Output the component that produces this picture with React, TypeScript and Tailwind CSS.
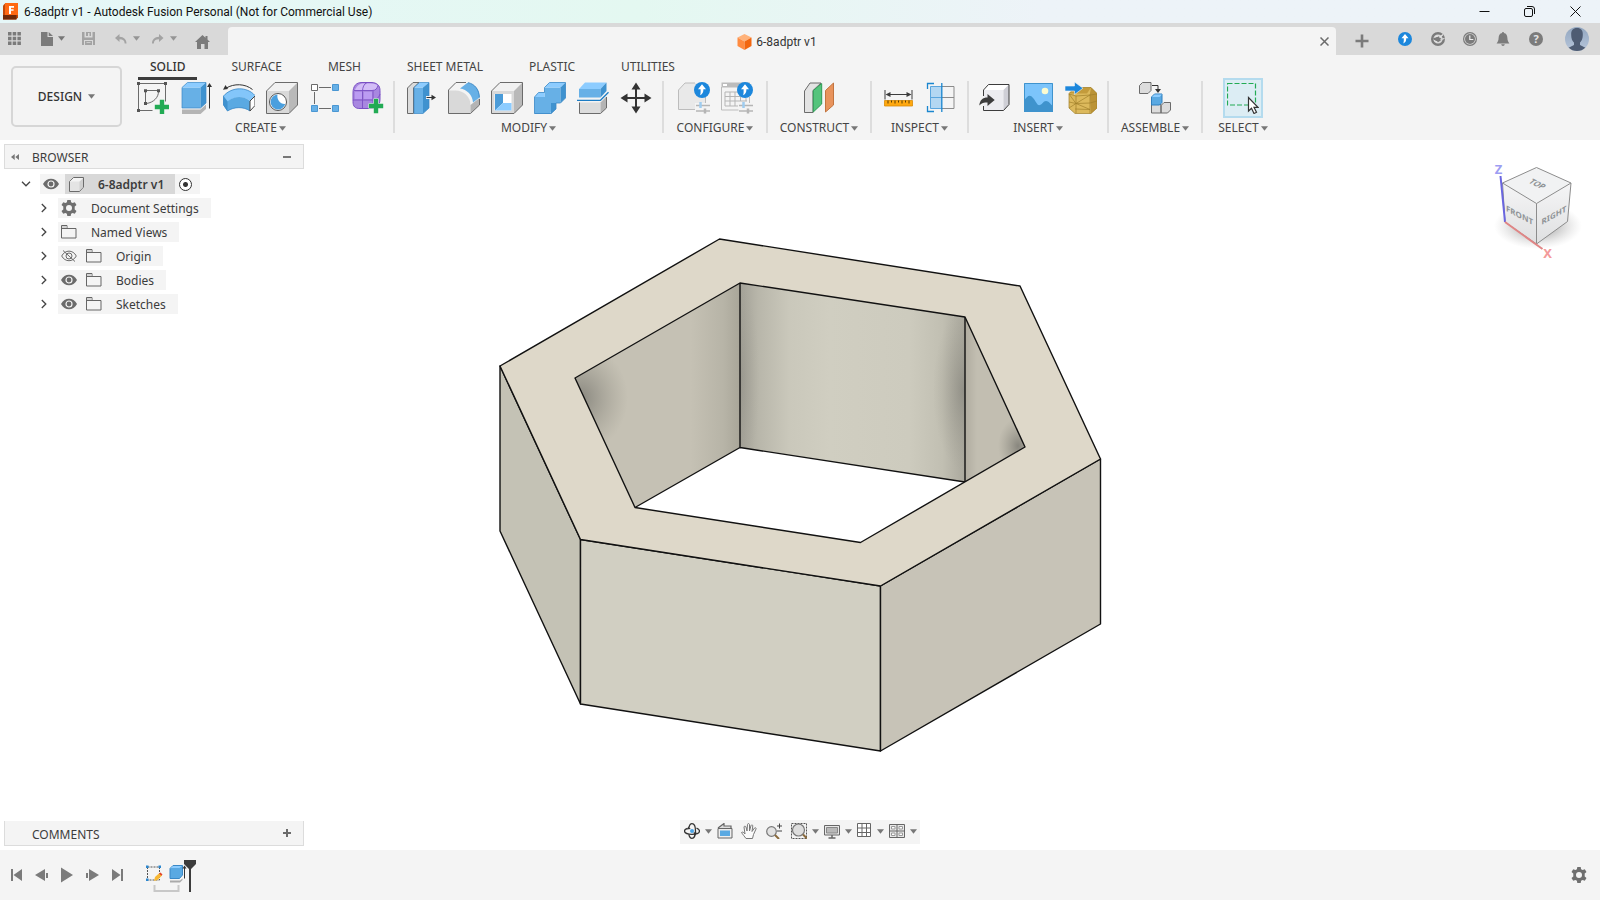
import React from 'react'

const LINE = '#6b6b6b'
const DARK = '#3c3c3c'

const Caret = ({ className = 'text-[#777777]' }: { className?: string }) => (
  <svg className={`${className} shrink-0`} width="7" height="5" viewBox="0 0 7 5" fill="currentColor">
    <path d="M0 0.3h7L3.5 4.8z" />
  </svg>
)

const Icon = ({ children, size = 32 }: { children: React.ReactNode; size?: number }) => (
  <svg className="shrink-0" width={size} height={size} viewBox={`0 0 ${size} ${size}`} fill="none">
    {children}
  </svg>
)

const GreenPlus = ({ x, y }: { x: number; y: number }) => (
  <path
    transform={`translate(${x} ${y})`}
    d="M-2.2-7.2h4.4v5h5v4.4h-5v5h-4.4v-5h-5v-4.4h5z"
    fill="#22ab54"
    stroke="#f4f4f4"
    strokeWidth="1"
    paintOrder="stroke"
  />
)

const UpBadge = ({ x, y, r }: { x: number; y: number; r: number }) => (
  <g transform={`translate(${x} ${y}) scale(${r / 8})`}>
    <circle r="8" fill="#1c87dc" />
    <path d="M0-5.8L4-0.8H1.4C1.4 2 .8 4-2 5.2-1.2 3.5-1.4 1.500-1.400-.8H-4z" fill="#fff" />
  </g>
)

const Sliders = () => (
  <g>
    <path d="M18 23.500h14M18 29h14" stroke="#b5b5b5" strokeWidth="1.500" />
    <path d="M22.500 20v6" stroke="#9fcdf0" strokeWidth="2.500" />
    <path d="M27 26.500v5" stroke="#b5b5b5" strokeWidth="2.500" />
  </g>
)

const icons: Record<string, React.ReactNode> = {
  sketch: (
    <>
      <path d="M1.500 28.500v-27h27v18M1.500 28.500h14" stroke={LINE} />
      <path d="M8.500 21V8.500H21M21.500 9.500c0 6-5 11-12 12" stroke={LINE} />
      <path d="M0 0h3v3H0zM27 0h3v3h-3zM0 27h3v3H0zM7 7.200h3v3H7zM20 7.200h3v3h-3zM7 20h3v3H7z" fill="#555" />
      <GreenPlus x={25} y={25} />
    </>
  ),
  extrude: (
    <>
      <path d="M2 27.500h18.500l5.500-5v4.500l-5.500 5H2z" fill="#b4b4b4" />
      <path d="M2 5.500h18.500v20.500H2z" fill="#67b0e6" />
      <path d="M2 5.500l5.500-5H26l-5.500 5z" fill="#8cccff" />
      <path d="M20.500 5.500l5.500-5v20.500l-5.500 5z" fill="#3f92cf" />
      <path d="M2 26V5.500l5.500-5H26v20.500l-5.500 5z" stroke="#3a88c6" strokeWidth="0.700" />
      <path d="M29.500 3v23.500" stroke="#333" />
      <path d="M27 5l2.500-4L32 5z" fill="#333" />
    </>
  ),
  revolve: (
    <>
      <path d="M3 6.200C11 1.300 22 1.500 29.500 7.500" stroke="#333" />
      <path d="M0 7.800L2.500 3l2.500 4z" fill="#333" />
      <path d="M.5 14C9 4.500 24 4.500 32 13.500l-5 5.500c-6-5-16-5-22.500 1z" fill="#83c6fa" />
      <path d="M.5 14l4 5.500C11 13.500 21 13.500 27 19v10c-6-4.500-16-4.500-22.500 0L.5 23z" fill="#5aa9e2" />
      <path d="M.5 14l4 5.500V29L.5 23z" fill="#3f92cf" />
      <path d="M.5 23V14C9 4.500 24 4.500 32 13.500M.5 23l4 6c6.500-4.500 16.500-4.500 22.500 0" stroke="#3a88c6" strokeWidth="0.800" />
      <path d="M27 19l5-5v9.500L27 29z" fill="#fff" stroke="#444" />
    </>
  ),
  hole: (
    <>
      <path d="M.5 9h22.500v22.500H.5z" fill="#d9d9d9" />
      <path d="M.5 9L9 .5h22.500L23 9z" fill="#f1f1f1" />
      <path d="M23 9l8.500-8.500V23L23 31.500z" fill="#b9b9b9" />
      <path d="M.5 9L9 .5h22.500V23L23 31.500H.5z" stroke={LINE} />
      <circle cx="12" cy="20" r="8.500" fill="#fff" stroke="#555" />
      <path d="M11.500 12.500a7.500 7.500 0 1 0 7.800 9.500c-5 .5-8.800-4.500-7.800-9.500z" fill="#4a9fde" />
    </>
  ),
  pattern: (
    <>
      <path d="M10 5.500h12M5.500 10v12M10 26.500h12" stroke={LINE} />
      <path d="M2.500 2.500h6v6h-6z" fill="#fff" stroke={LINE} />
      <path d="M23.500 2.500h6v6h-6zM2.500 23.500h6v6h-6zM23.500 23.500h6v6h-6z" fill="#67b0e6" stroke="#4a97d3" />
    </>
  ),
  form: (
    <>
      <path d="M1 11C1 4 4 .5 10 .5h9c6 0 9 3 9 8V17c0 6-3 9.500-9 9.500H8c-5 0-7-2-7-7z" fill="#a887e0" stroke="#7a4fc4" />
      <path d="M3 8C5 3 8 1.500 12 1.500h7c4 0 6 1 7 3l-3 3.500z" fill="#d3bdf7" />
      <path d="M3 10h7v7H3zM12 10h8v7h-8z" fill="#bb9bf2" />
      <path d="M1 18h20c4 0 6-3 7-6M10.500 26V9.500C10.500 5 12 2 15 .5M2 8.500h18c4 0 5-2 6-5M21 26V9" stroke="#7a4fc4" strokeWidth="0.900" />
      <GreenPlus x={24} y={24} />
    </>
  ),
  pressPull: (
    <>
      <path d="M2.500 6L8 .5h6L8.500 6v25.500h-6z" fill="#dcdcdc" stroke={LINE} />
      <path d="M9 5.500h9v26H9z" fill="#67b0e6" />
      <path d="M9 5.500l5.500-5H24l-6 5z" fill="#8cccff" />
      <path d="M18 5.500l6-5V26l-6 5.500z" fill="#3f92cf" />
      <path d="M9 31.500v-26l5.500-5H24V26l-6 5.500z" stroke="#3a88c6" strokeWidth="0.700" />
      <path d="M21 15.500h7" stroke="#f4f4f4" strokeWidth="3" />
      <path d="M21.500 15.500h6" stroke="#333" />
      <path d="M26.500 12.800l4.500 2.700-4.500 2.700z" fill="#333" />
    </>
  ),
  fillet: (
    <>
      <path d="M.5 8L8 .5h10.500L13 7z" fill="#f4f4f4" />
      <path d="M.5 8.500h7C16 8.500 22.500 15 22.500 23v8.500H.5z" fill="#d9d9d9" />
      <path d="M22.500 23l9-7v7l-9 8.500z" fill="#b4b4b4" />
      <path d="M12 6.500L19.500.7C27 2 31.500 8 31.500 15.500L25 20.500C24.500 13 19 7.500 12 6.500z" fill="#67b0e6" />
      <path d="M20 .7C27 2 31.300 8 31.300 15.500" stroke="#3a88c6" />
      <path d="M18 .5H8L.5 8v23.500h22L31.500 23v-6" stroke={LINE} />
    </>
  ),
  shell: (
    <>
      <path d="M.5 9h22.500v22.500H.5z" fill="#d9d9d9" />
      <path d="M.5 9L9 .5h22.500L23 9z" fill="#f1f1f1" />
      <path d="M23 9l8.500-8.500V23L23 31.500z" fill="#b9b9b9" />
      <path d="M.5 9L9 .5h22.500V23L23 31.500H.5z" stroke={LINE} />
      <path d="M3.500 12h17v16.500h-17z" fill="#fff" />
      <path d="M4 12h8v9l-8 7.500z" fill="#4a9bd8" />
      <path d="M12 21h8.500v7.500H4z" fill="#8cccff" />
    </>
  ),
  combine: (
    <>
      <path d="M10.500 5.500h16V21h-9v5.500l-1 5.500H.5V15h10z" fill="#67b0e6" />
      <path d="M10.500 5.500l5-5h16l-5 5z" fill="#8cccff" />
      <path d="M26.500 5.500l5-5V16l-5 5z" fill="#3f92cf" />
      <path d="M.5 15l4-4.500h6V15z" fill="#8cccff" />
      <path d="M17 21h5v6l-5 5z" fill="#3f92cf" />
      <path d="M.5 31.500V15l4-4.500h6v-5l5-5h16V16l-5 5H22v6l-5 4.500z" stroke="#3a88c6" strokeWidth="0.800" />
    </>
  ),
  split: (
    <>
      <path d="M2 7h21.500v8.500H2z" fill="#67b0e6" />
      <path d="M2 7L8 .5h21.500l-6 6.500z" fill="#8cccff" />
      <path d="M23.500 7l6-6.500V9l-6 6.500z" fill="#3f92cf" />
      <path d="M2 20.500h21.500v11H2z" fill="#dcdcdc" />
      <path d="M23.500 20.500l6-6V26l-6 5.500z" fill="#b4b4b4" />
      <path d="M2.500 20.500v11h21l6-5.500V15" stroke={LINE} />
      <path d="M0 18.300h23.500l8-8" stroke="#1c7cc4" strokeWidth="1.300" />
    </>
  ),
  move: (
    <>
      <path d="M16 5v22M5 16h22" stroke="#333" strokeWidth="2" />
      <path d="M16 .5l4.500 7h-9zM16 31.500l4.500-7h-9zM.5 16l7-4.500v9zM31.500 16l-7-4.500v9z" fill="#333" />
    </>
  ),
  configure: (
    <>
      <path d="M.5 8L7 1h21v20H17v6.500H.5z" fill="#e9e9e9" />
      <path d="M17 27.500H.5V8L7 1h10M27.500 15v6" stroke="#bcbcbc" />
      <UpBadge x={24} y={8} r={8} />
      <Sliders />
    </>
  ),
  configTable: (
    <>
      <path d="M.5.500h28.500v5H.5z" fill="#bcbcbc" />
      <path d="M2 2h4v2H2z" fill="#fff" />
      <path d="M.5 5v23h17M28.500 15v6" stroke="#bcbcbc" />
      <path d="M4 10h15M4 14.500h22M4 19h22M4 24h13M4 10v14M9 10v14M14 10v14M19.500 15v4M25 16v3" stroke="#b5b5b5" />
      <UpBadge x={24} y={8} r={8} />
      <Sliders />
    </>
  ),
  construct: (
    <>
      <path d="M1.500 9L7 1h11l-8 7.500v22H1.500z" fill="#e3e3e3" stroke={LINE} />
      <path d="M10.300 8.500l8.400-7V22l-8.400 8z" fill="#55c47c" stroke="#2e9c56" />
      <path d="M22.500 8.500L30.500 1v22l-8 7z" fill="#e8935c" stroke="#c2743f" />
    </>
  ),
  measure: (
    <>
      <path d="M3 8v9.500M30 8v9.500M5 12.500h23" stroke={DARK} />
      <path d="M3.500 12.500l5-2.500v5zM29.500 12.500l-5-2.500v5z" fill={DARK} />
      <path d="M2.500 18.500h28v5.500h-28z" fill="#ffa80f" stroke="#d98b06" strokeWidth="0.800" />
      <path d="M6 18.500v3M9.500 18.500v2M13 18.500v3M16.500 18.500v2M20 18.500v3M23.500 18.500v2M27 18.500v3" stroke="#5a3c00" />
    </>
  ),
  section: (
    <>
      <path d="M5.500 4.500h11.500v22H5.500z" fill="#b3d7f2" />
      <path d="M17 4.500h12v22H17M17 15.500h12" stroke="#8b8b8b" />
      <path d="M17 4.500H5.500v22H17M5.500 15.500H17" stroke="#5aa5dd" />
      <path d="M16.800 1v29M2.500 7V1.500H9M2.500 24v5.500H9" stroke="#1a86cf" strokeWidth="1.300" />
    </>
  ),
  derive: (
    <>
      <path d="M4.500 8h20v20.500h-20z" fill="#ececf0" />
      <path d="M4.500 8l5-5.500H30L24.500 8z" fill="#fff" />
      <path d="M24.500 8L30 2.500v20l-5.500 6z" fill="#cfcfd6" />
      <path d="M4.500 14V8l5-5.500H30v20l-5.500 6h-20V24" stroke={DARK} />
      <path d="M.3 23.500c.5-5.500 3.500-8 8.200-8v-3.500L15.700 18l-7.200 6v-3.500c-3.500 0-6 .5-8.200 3z" fill={DARK} />
    </>
  ),
  image: (
    <>
      <path d="M2 1h29v29H2z" fill="#7cc4fb" />
      <path d="M2 19c3-5 6-7 9-3 3 3 4 8 7 7s3-4 6-4 4 3 7 5v6H2z" fill="#3f93cd" />
      <circle cx="23" cy="9" r="3.300" fill="#fbfbd0" />
      <path d="M2.500 1.500h28v28h-28z" stroke="#3f93cd" />
    </>
  ),
  mesh: (
    <>
      <path d="M10 5.500h16l6 6V26l-6 5.500H10L4 26V11.500z" fill="#dcb95c" />
      <path d="M10 5.500h16l-4 6H4z" fill="#c39b3c" />
      <path d="M26 5.500l6 6V26l-6 5.500-1-20z" fill="#bb9336" />
      <path d="M10 5.500h16l6 6V26l-6 5.500H10L4 26V11.500zM4 12l7 2 14-1 7-1M4 20l7 1.500 14-.5 7-2M10 27l15 .5M11 14v17M25 12.500v19M4 12l7 9.500L25 13M4 26l7-4.500 14 6" stroke="#a07f2a" strokeWidth="0.700" />
      <path d="M0 4h9.500V0L18 6.200 9.500 12.500V9H0z" fill="#1c87dc" stroke="#f4f4f4" strokeWidth="0.600" />
    </>
  ),
  assemble: (
    <>
      <path d="M.5 3.500l3-3h8.500v8l-3 3H.5z" fill="#dcdcdc" stroke={LINE} />
      <path d="M13 3.500h6v4" stroke="#333" />
      <path d="M16 7h6l-3 4z" fill="#333" />
      <path d="M12.500 22.500h9.500v8.500h-9.500zM22 23.500l3-3h6.500V28l-3 3H22z" fill="#dcdcdc" stroke={LINE} />
      <path d="M12.500 15l3-3H23v8.500L20.500 23h-8z" fill="#5aa9e2" stroke="#2f7fbe" />
      <path d="M13 15l2.500-2.500H23L20.500 15z" fill="#8cccff" />
    </>
  ),
  select: (
    <>
      <path d="M.5 1.500h28v21.500H.5z" stroke="#22ab54" strokeWidth="1.200" strokeDasharray="5 2" />
      <path d="M21.500 15.500v13.500l3-2.800 2.500 5.300 2.500-1.200-2.500-5h4z" fill="#fff" stroke="#333" strokeWidth="1.200" />
    </>
  ),
}

const ribbonTabs = ['SOLID', 'SURFACE', 'MESH', 'SHEET METAL', 'PLASTIC', 'UTILITIES']

const ribbonGroups = [
  { name: 'CREATE', width: 'w-[267px]', tools: ['sketch', 'extrude', 'revolve', 'hole', 'pattern', 'form'] },
  { name: 'MODIFY', width: 'w-[269px]', tools: ['pressPull', 'fillet', 'shell', 'combine', 'split', 'move'] },
  { name: 'CONFIGURE', width: 'w-[104px]', tools: ['configure', 'configTable'] },
  { name: 'CONSTRUCT', width: 'w-[104px]', tools: ['construct'] },
  { name: 'INSPECT', width: 'w-[97px]', tools: ['measure', 'section'] },
  { name: 'INSERT', width: 'w-[140px]', tools: ['derive', 'image', 'mesh'] },
  { name: 'ASSEMBLE', width: 'w-[94px]', tools: ['assemble'] },
  { name: 'SELECT', width: 'w-[80px]', tools: ['select'] },
]

const TitleBar = () => (
  <header className="flex h-[23px] shrink-0 items-center bg-linear-to-r from-[#e6f7f8] via-[#e4f8f1] via-40% to-[#edf3f8] to-65% pl-[3px] font-[Roboto,sans-serif] text-xs text-[#111111]">
    <svg width="15" height="17" viewBox="0 0 15 17" className="mr-[6px]">
      <path d="M0 2.500L2 .5h13v14l-2 2H0z" fill="#c14a0a" />
      <path d="M2 0h13v12H2z" fill="#ff6a13" />
      <path d="M0 12h13.500v4.500H0z" fill="#6e2a08" />
      <path d="M6 3h5v1.700H8v1.500h2.600v1.600H8V11H6z" fill="#fff" />
    </svg>
    <h1 className="flex-1 whitespace-nowrap">6-8adptr v1 - Autodesk Fusion Personal (Not for Commercial Use)</h1>
    <div className="flex pr-[2px]">
      <button aria-label="Minimize" className="flex h-5 w-[46px] items-center justify-center">
        <svg width="11" height="11" viewBox="0 0 11 11" stroke="#111"><path d="M.5 5.500h10" /></svg>
      </button>
      <button aria-label="Restore" className="flex h-5 w-[45px] items-center justify-center">
        <svg width="11" height="11" viewBox="0 0 11 11" stroke="#111" fill="none">
          <rect x=".5" y="2.500" width="8" height="8" rx="1.500" />
          <path d="M3 .5h5a2.500 2.500 0 0 1 2.500 2.500v5" />
        </svg>
      </button>
      <button aria-label="Close" className="flex h-5 w-[46px] items-center justify-center">
        <svg width="11" height="11" viewBox="0 0 11 11" stroke="#111"><path d="M.5.500l10 10M10.500.500l-10 10" /></svg>
      </button>
    </div>
  </header>
)

const QuickAccess = () => (
  <nav className="flex w-[228px] shrink-0 items-center pb-[1px] pl-2 text-[#7b7b7b]">
    <button aria-label="Data panel">
      <svg width="13" height="13" viewBox="0 0 13 13" fill="currentColor">
        <path d="M0 0h3.500v3.500H0zM4.700 0h3.500v3.500H4.700zM9.400 0h3.500v3.500H9.400zM0 4.700h3.500v3.500H0zM4.700 4.700h3.500v3.500H4.700zM9.400 4.700h3.500v3.500H9.400zM0 9.400h3.500v3.500H0zM4.700 9.400h3.500v3.500H4.700zM9.400 9.400h3.500v3.500H9.400z" />
      </svg>
    </button>
    <button aria-label="File" className="ml-5 flex items-center gap-[5px]">
      <svg width="12" height="14" viewBox="0 0 12 14" fill="currentColor">
        <path d="M0 0h6.500v5H12v9H0zM7.700 0L12 4H7.700z" />
      </svg>
      <Caret />
    </button>
    <button aria-label="Save" className="ml-[17px] text-[#a3a3a3]">
      <svg width="13" height="13" viewBox="0 0 13 13" fill="currentColor">
        <path fillRule="evenodd" d="M0 0h2.500v5.500h8V0H13v13h-2v-5H2v5H0zM4 0h5v4H7.500V1H6v3H4zM3 9h7v4H3zM4.500 10.200v.8h4v-.8z" />
      </svg>
    </button>
    <button aria-label="Undo" className="ml-5 flex items-center gap-[6px] text-[#a3a3a3]">
      <svg width="12" height="10" viewBox="0 0 12 10" fill="currentColor">
        <path d="M0 4l4.500-4v2.800C9 3 11.500 5.500 11.500 9.500h-1.800C9.500 6.500 8 5.200 4.500 5.200V8z" />
      </svg>
      <Caret className="text-[#959595]" />
    </button>
    <button aria-label="Redo" className="ml-[12px] flex items-center gap-[6px] text-[#a3a3a3]">
      <svg width="12" height="10" viewBox="0 0 12 10" fill="currentColor">
        <path d="M11.500 4L7 0v2.800C2.500 3 0 5.500 0 9.500h1.800C2 6.500 3.500 5.200 7 5.200V8z" />
      </svg>
      <Caret className="text-[#959595]" />
    </button>
    <button aria-label="Home" className="ml-[18px] pt-[6px]">
      <svg width="15" height="14" viewBox="0 0 15 14" fill="currentColor">
        <path d="M7.500 0l3 2.700V1h2v3.500L15 7H13v7H9.500V9h-3.500v5H2V7H0z" />
      </svg>
    </button>
  </nav>
)

const AccountBar = () => (
  <div className="flex w-[264px] shrink-0 items-center justify-between pr-[11px] pb-[1px] pl-[19px] text-[#7b7b7b]">
    <button aria-label="New tab" className="mr-[10px] pt-1">
      <svg width="14" height="14" viewBox="0 0 14 14" stroke="currentColor" strokeWidth="2.600"><path d="M7 .5v13M.5 7h13" /></svg>
    </button>
    <button aria-label="Updates">
      <svg width="14" height="14" viewBox="0 0 14 14"><UpBadge x={7} y={7} r={7} /></svg>
    </button>
    <button aria-label="Extensions">
      <svg width="14" height="14" viewBox="0 0 14 14" fill="none">
        <circle cx="7" cy="7" r="5.800" stroke="currentColor" strokeWidth="2.400" />
        <path d="M2 6.500L7.500 4l3.500 3.500L7.500 10 4 9z" fill="currentColor" />
        <path d="M4 4.800l3.500-1M8.500 5.500L12 2.500M9.500 7.500l4-1M3 8.500l3 1.500" stroke="#e4e4e4" strokeWidth="1.200" />
      </svg>
    </button>
    <button aria-label="Job status">
      <svg width="14" height="14" viewBox="0 0 14 14">
        <circle cx="7" cy="7" r="6.400" fill="none" stroke="currentColor" strokeWidth="1.200" />
        <circle cx="7" cy="7" r="5" fill="currentColor" />
        <path d="M6.800 3.500v4h3.500" stroke="#eee" strokeWidth="1.200" fill="none" />
      </svg>
    </button>
    <button aria-label="Notifications">
      <svg width="14" height="14" viewBox="0 0 14 14" fill="currentColor">
        <path d="M6.200 0h1.600v1c2.700.5 3.400 2.300 3.600 5 .1 2.500.8 3.500 2 5.500H.6c1.200-2 1.900-3 2-5.500C2.800 3.300 3.500 1.500 6.200 1zM5.200 12.300h3.600C8.500 13.500 8 14 7 14s-1.500-.5-1.800-1.700z" />
      </svg>
    </button>
    <button aria-label="Help" className="flex size-[14px] items-center justify-center rounded-full bg-[#7b7b7b] text-[11px] leading-none font-bold text-[#e4e4e4]">?</button>
    <button aria-label="Account" className="ml-[3px]">
      <svg width="24" height="24" viewBox="0 0 24 24">
        <defs>
          <linearGradient id="avatar" x1="0" y1="0" x2="0" y2="1">
            <stop offset="0" stopColor="#93a7c0" />
            <stop offset="1" stopColor="#b6c5da" />
          </linearGradient>
          <clipPath id="avatarClip"><circle cx="12" cy="12" r="12" /></clipPath>
        </defs>
        <g clipPath="url(#avatarClip)">
          <path d="M0 0h24v24H0z" fill="url(#avatar)" />
          <path d="M12 1c4 0 6 2.500 5.800 6.500C17.800 12 16.500 14 15 15.500V18l6 3v3H3v-3l6-3v-2.500C7.500 14 6.200 12 6.200 7.500 6 3.500 8 1 12 1z" fill="#4e5c73" />
        </g>
      </svg>
    </button>
  </div>
)

const TabBar = () => (
  <div className="flex h-8 shrink-0 bg-[#d9d9d9]">
    <QuickAccess />
    <div className="mt-1 flex flex-1 items-center rounded-t-[4px] bg-[#f4f4f4] pt-px pr-[7px]">
      <div className="flex flex-1 items-center justify-center gap-[4px] pr-[4px] pl-[10px] font-[Roboto,sans-serif] text-xs text-[#333333]">
        <svg width="15" height="16" viewBox="0 0 15 16">
          <path d="M7.500 0L14.500 3.500 7.500 7.500.500 3.500z" fill="#ffb27a" />
          <path d="M.5 3.500l7 4V16l-7-4z" fill="#ff8b40" />
          <path d="M14.500 3.500l-7 4V16l7-4z" fill="#f2660f" />
        </svg>
        <span>6-8adptr v1</span>
      </div>
      <button aria-label="Close tab">
        <svg width="9" height="9" viewBox="0 0 9 9" stroke="#6b6b6b" strokeWidth="1.500"><path d="M.5.500l8 8M8.500.500l-8 8" /></svg>
      </button>
    </div>
    <AccountBar />
  </div>
)

const Ribbon = () => (
  <div className="flex h-[85px] shrink-0 bg-[#f4f4f4] pl-[11px]">
    <button className="mt-[11px] flex h-[61px] w-[111px] shrink-0 items-center justify-center gap-[6px] rounded-[5px] border-2 border-[#d6d6d6] text-xs font-medium text-[#333333]">
      DESIGN <Caret />
    </button>
    <div className="ml-[6px] flex flex-col">
      <div role="tablist" className="flex h-[25px] gap-[22px] pl-[10px]">
        {ribbonTabs.map((tab, i) => (
          <button
            key={tab}
            role="tab"
            aria-selected={i === 0}
            className={
              i === 0
                ? 'border-b-[3px] border-[#3c3c3c] px-3 pt-[2px] text-xs font-medium whitespace-nowrap text-[#333333]'
                : 'border-b-[3px] border-transparent px-3 pt-[2px] text-xs whitespace-nowrap text-[#444444]'
            }
          >
            {tab}
          </button>
        ))}
      </div>
      <div className="flex">
        {ribbonGroups.map(group => (
          <section
            key={group.name}
            className={`${group.width} mt-[1px] flex h-[52px] shrink-0 flex-col items-center border-r-2 border-[#dddddd] last:border-r-0`}
          >
            <div className="flex h-[33px] shrink-0 items-center">
              {group.tools.map(tool => (
                <button
                  key={tool}
                  aria-label={tool}
                  className={
                    tool === 'select'
                      ? 'flex size-10 items-center justify-center border-2 border-[#b4dbee] bg-[#dcedf4]'
                      : 'flex h-9 w-[43px] items-center justify-center'
                  }
                >
                  <Icon>{icons[tool]}</Icon>
                </button>
              ))}
            </div>
            <button className="mt-1 flex h-5 shrink-0 items-center gap-[2px] text-xs whitespace-nowrap text-[#444444]">
              {group.name} <Caret />
            </button>
          </section>
        ))}
      </div>
    </div>
  </div>
)

const Model = () => (
  <svg className="block h-full w-full" viewBox="0 140 1600 710" role="img" aria-label="Hexagonal adapter body">
    <defs>
      <linearGradient id="backWall" gradientUnits="userSpaceOnUse" x1="740" y1="0" x2="965" y2="0">
        <stop offset="0" stopColor="#a3a197" />
        <stop offset="0.080" stopColor="#b8b6aa" />
        <stop offset="0.220" stopColor="#cac8bb" />
        <stop offset="0.400" stopColor="#d0cec1" />
        <stop offset="0.750" stopColor="#cdcbbe" />
        <stop offset="0.900" stopColor="#c1bfb2" />
        <stop offset="1" stopColor="#aaa89d" />
      </linearGradient>
      <linearGradient id="leftWall" gradientUnits="userSpaceOnUse" x1="575" y1="0" x2="740" y2="0">
        <stop offset="0" stopColor="#c5c1b4" />
        <stop offset="0.700" stopColor="#c5c1b4" />
        <stop offset="0.900" stopColor="#b7b4a7" />
        <stop offset="1" stopColor="#a9a699" />
      </linearGradient>
      <linearGradient id="rightWall" gradientUnits="userSpaceOnUse" x1="965" y1="0" x2="1025" y2="0">
        <stop offset="0" stopColor="#b0aca0" />
        <stop offset="0.200" stopColor="#c2beb1" />
        <stop offset="1" stopColor="#c2beb1" />
      </linearGradient>
      <radialGradient id="shade">
        <stop offset="0" stopColor="#6f6e68" stopOpacity="0.700" />
        <stop offset="1" stopColor="#8b897e" stopOpacity="0" />
      </radialGradient>
      <clipPath id="leftClip"><path d="M575 378L740 283v164.500L635 507.500z" /></clipPath>
      <clipPath id="backClip"><path d="M740 283l225 34v165l-225-34.500z" /></clipPath>
      <clipPath id="rightClip"><path d="M965 317l60 130-60 35z" /></clipPath>
    </defs>
    <path d="M575 378L740 283v164.500L635 507.500z" fill="url(#leftWall)" />
    <path d="M740 283l225 34v165l-225-34.500z" fill="url(#backWall)" />
    <path d="M965 317l60 130-60 35z" fill="url(#rightWall)" />
    <ellipse cx="580" cy="398" rx="48" ry="54" fill="url(#shade)" clipPath="url(#leftClip)" />
    <ellipse cx="963" cy="390" rx="30" ry="80" fill="url(#shade)" fillOpacity="0.600" clipPath="url(#backClip)" />
    <ellipse cx="740" cy="380" rx="20" ry="95" fill="url(#shade)" fillOpacity="0.300" clipPath="url(#backClip)" />
    <ellipse cx="1018" cy="446" rx="20" ry="28" fill="url(#shade)" clipPath="url(#rightClip)" />
    <g stroke="#111" strokeWidth="1.400" strokeLinejoin="round">
      <path d="M740 283v164.500M965 317v165M635 507.500l105-60L965 482" fill="none" />
      <path d="M500 366l80.500 173.500V704L500 531z" fill="#c4c2b5" />
      <path d="M580.500 539.500l300 46.500v165l-300-47z" fill="#d1cfc2" />
      <path d="M880.500 586l220-127v165l-220 127z" fill="#c7c3b7" />
      <path
        d="M719.500 239l300.500 47 80.500 173-220 127-300-46.500L500 366zM740 283L575 378l60 129.500 225.500 35L1025 447l-60-130z"
        fill="#ded8c9"
        fillRule="evenodd"
      />
    </g>
  </svg>
)

const ViewCube = () => (
  <svg className="absolute top-5 right-[10px]" width="100" height="110" viewBox="0 0 100 110" role="img" aria-label="View cube">
    <defs>
      <radialGradient id="cubeShadow">
        <stop offset="0.400" stopColor="#888" stopOpacity="0.500" />
        <stop offset="1" stopColor="#bbb" stopOpacity="0" />
      </radialGradient>
      <linearGradient id="cubeFace" x1="0" y1="0" x2="0" y2="1">
        <stop offset="0" stopColor="#f5f5f6" />
        <stop offset="1" stopColor="#dfe0e1" />
      </linearGradient>
    </defs>
    <ellipse cx="48" cy="66" rx="44" ry="23" fill="url(#cubeShadow)" />
    <path d="M46.500 7.500L81 23 46.500 43.500 12.500 23z" fill="#f1f2f3" />
    <path d="M12.500 23l34 20.500V84L15 62z" fill="url(#cubeFace)" />
    <path d="M81 23L46.500 43.500V84l31-22.500z" fill="url(#cubeFace)" />
    <path d="M12.500 23L46.500 7.500 81 23l-3.500 38.500L46.500 84 15 62zM12.500 23l34 20.500L81 23M46.500 43.500V84" fill="none" stroke="#8c8c8c" />
    <path d="M10.500 16L15 62" stroke="#6a66e0" strokeWidth="2" />
    <path d="M15 62l37.500 27" stroke="#e08585" strokeWidth="2" />
    <g fontFamily="Noto Sans, sans-serif" fontWeight="700" textAnchor="middle">
      <text x="0" y="0" transform="translate(29.500 58) skewY(28)" fontSize="8" fill="#8f9396">FRONT</text>
      <text x="0" y="0" transform="translate(64 58) skewY(-29)" fontSize="8" fill="#8f9396">RIGHT</text>
      <text x="0" y="0" transform="translate(45 26) rotate(26) skewX(-25)" fontSize="8" fill="#8f9396">TOP</text>
      <text x="8.500" y="14" fontSize="13" fill="#9d9df2">Z</text>
      <text x="57.500" y="98" fontSize="13" fill="#f39a9a">X</text>
    </g>
  </svg>
)

const Eye = ({ hidden = false }: { hidden?: boolean }) => (
  <svg width="16" height="12" viewBox="0 0 16 12" fill="none">
    {hidden ? (
      <>
        <path d="M.7 6C4-.5 12-.5 15.300 6 12 12.300 4 12.300.7 6z" stroke="#6b6b6b" />
        <circle cx="8" cy="6" r="3" stroke="#6b6b6b" />
        <path d="M2 .5l12 11" stroke="#6b6b6b" />
      </>
    ) : (
      <>
        <path d="M0 6C3.500-1 12.500-1 16 6c-3.500 7-12.500 7-16 0z" fill="#6b6b6b" />
        <circle cx="8" cy="6" r="3" stroke="#f4f4f4" strokeWidth="1.200" />
      </>
    )}
  </svg>
)

const Folder = () => (
  <svg width="16" height="14" viewBox="0 0 16 14" fill="none" stroke="#666">
    <path d="M.5.500h5.500v3h9v9.500H.5z" />
    <path d="M.5 3.500H6" />
    <path d="M1 1h4.500v2H1z" fill="#d4d4d4" stroke="none" />
  </svg>
)

const GearIcon = ({ hub }: { hub: string }) => (
  <svg width="16" height="16" viewBox="0 0 16 16" fill="#6f6f6f">
    <path d="M6.300 0h3.400l.4 2.300 1.500.8 2.200-.9 1.700 2.900-1.800 1.500v2.800l1.800 1.500-1.700 2.900-2.200-.9-1.500.8-.4 2.300H6.300l-.4-2.300-1.500-.8-2.200.9-1.700-2.900 1.800-1.500V6.600L.5 5.100l1.700-2.900 2.200.9 1.500-.8z" />
    <circle cx="8" cy="8" r="3" fill={hub} />
  </svg>
)

const ExpandArrow = () => (
  <svg width="6" height="10" viewBox="0 0 6 10" fill="none" stroke="#444" strokeWidth="1.300">
    <path d="M.8 1l4 4-4 4" />
  </svg>
)

const treeItems = [
  { name: 'Document Settings', icon: 'gear' },
  { name: 'Named Views', icon: 'folder' },
  { name: 'Origin', icon: 'folder', eye: 'hidden' },
  { name: 'Bodies', icon: 'folder', eye: 'shown' },
  { name: 'Sketches', icon: 'folder', eye: 'shown' },
]

const Browser = () => (
  <aside className="absolute top-1 left-1 w-[300px] text-xs text-[#3c3c3c]">
    <div className="flex h-[25px] items-center border border-[#dcdcdc] bg-[#f4f4f4] px-3">
      <button aria-label="Collapse" className="-ml-[6px] w-[21px]">
        <svg width="8" height="6" viewBox="0 0 8 6" fill="#777"><path d="M3.700 0v6L0 3zM8 0v6L4.300 3z" /></svg>
      </button>
      <h2 className="flex-1 pt-[2px]">BROWSER</h2>
      <button aria-label="Minimize browser" className="h-[2px] w-2 bg-[#777777]" />
    </div>
    <ul className="pt-[3px]">
      <li className="flex h-6 items-center">
        <button aria-label="Collapse 6-8adptr v1" className="flex w-9 justify-center pl-[8px]">
          <svg width="10" height="6" viewBox="0 0 10 6" fill="none" stroke="#444" strokeWidth="1.300"><path d="M1 .8l4 4 4-4" /></svg>
        </button>
        <div className="flex h-5 items-center bg-[#f4f4f4] pr-2">
          <button aria-label="Toggle visibility" className="px-[3px] pr-[6px]"><Eye /></button>
          <label htmlFor="root-active" className="flex h-5 items-center gap-[14px] bg-[#d8d8d8] pr-[11px] pl-1 font-semibold">
            <svg width="15" height="15" viewBox="0 0 15 15" stroke="#6b6b6b">
              <path d="M.5 4.500l4-4h10V10l-4 4.500H.5z" fill="#e4e4e4" />
              <path d="M10.500 4.500l3.500-3.500v9l-3.500 4z" fill="#cfcfcf" stroke="none" />
              <path d="M1 4.500L4.700 1H14l-3.500 3.500z" fill="#f4f4f4" stroke="none" />
            </svg>
            <span className="pt-px">6-8adptr v1</span>
          </label>
          <input
            id="root-active"
            type="radio"
            defaultChecked
            className="ml-1 size-[13px] appearance-none rounded-full border border-[#333333] bg-[radial-gradient(circle,#333333_0_2px,#ffffff_3px)]"
          />
        </div>
      </li>
      {treeItems.map(item => (
        <li key={item.name} className="flex h-6 items-center">
          <button aria-label={`Expand ${item.name}`} className="flex w-[54px] justify-center pl-[26px]">
            <ExpandArrow />
          </button>
          <div className="flex h-5 items-center bg-[#f4f4f4] pr-3 pl-[3px]">
            {item.eye && (
              <button aria-label={`Toggle ${item.name}`} className="mr-[9px]">
                <Eye hidden={item.eye === 'hidden'} />
              </button>
            )}
            {item.icon === 'gear' ? <GearIcon hub="#f4f4f4" /> : <Folder />}
            <span className="ml-[14px] pt-[2px]">{item.name}</span>
          </div>
        </li>
      ))}
    </ul>
  </aside>
)

const navTools = [
  {
    name: 'Orbit',
    menu: true,
    art: (
      <>
        <path d="M5 4.500C5.500 2 6.700.7 8 .7c2.200 0 3.500 3.300 3.500 7.300s-1.300 7.300-3.500 7.300c-1.500 0-2.700-1.800-3.200-4" stroke="#333" strokeWidth="1.300" />
        <path d="M12.500 5.200c1.800.7 3 1.700 3 2.800 0 2-3.300 3.300-7.500 3.300S.5 10 .5 8c0-1.100 1-2.100 2.800-2.700" stroke="#333" strokeWidth="1.300" />
        <path d="M2.500 6.500l2-3 2.200 2.500zM10.500 13.500l2.500-3.800-3.500-.4z" fill="#333" />
        <circle cx="8" cy="8" r="2" fill="#4aa3e6" />
      </>
    ),
  },
  {
    name: 'Look at',
    art: (
      <>
        <path d="M1 5l6-4.500V3h7v2" stroke="#666" strokeWidth="1.200" fill="#ddd" />
        <path d="M1 5.500h14V15H1z" fill="#eee" stroke="#666" />
        <path d="M3 7.500h10V13H3z" fill="#5aa9e2" />
      </>
    ),
  },
  {
    name: 'Pan',
    art: (
      <path
        d="M5 15.500C3.500 13.500 1.500 11 .5 9.500c1-1 2.500 0 3.500 1.500L3 4c.2-1.200 1.700-1 2 0l1 4L6.500 1.500c.2-1.200 1.700-1.200 2 0V8l1.500-5.500c.5-1 1.800-.7 1.800.4L11 8.500 13.500 5c.8-.8 2 0 1.500 1l-2.500 5.500-1 4z"
        stroke="#777"
        fill="#fafafa"
      />
    ),
  },
  {
    name: 'Zoom',
    art: (
      <>
        <circle cx="5.500" cy="8.500" r="4.800" fill="#e2e2e2" stroke="#777" strokeWidth="1.200" />
        <path d="M9 12l4 4" stroke="#8a6a3c" strokeWidth="2" />
        <path d="M11 3h5M13.500.5v5M11 8h5" stroke="#444" />
      </>
    ),
  },
  {
    name: 'Fit',
    menu: true,
    art: (
      <>
        <path d="M.5.500h15v15H.5z" stroke="#555" strokeDasharray="2 1" />
        <circle cx="7.500" cy="7" r="6" fill="#dedede" stroke="#777" strokeWidth="1.200" />
        <path d="M12 11.500l4 4" stroke="#8a6a3c" strokeWidth="2" />
      </>
    ),
  },
  {
    name: 'Display settings',
    menu: true,
    art: (
      <>
        <path d="M.5 2.500h15v9.500H.5z" fill="#e8e8e8" stroke="#666" />
        <path d="M2.500 4.500h11V10h-11z" fill="#b8b8b8" stroke="#888" />
        <path d="M8 12v3M4.500 15h7" stroke="#666" strokeWidth="1.500" />
      </>
    ),
  },
  {
    name: 'Grid and snaps',
    menu: true,
    art: <path d="M1.500.500h13v13h-13zM6 .5v13M10.500.5v13M1.500 5h13M1.500 9.500h13" stroke="#666" fill="#fff" />,
  },
  {
    name: 'Viewports',
    menu: true,
    art: (
      <>
        <path d="M.5 1.500h15v13H.5zM8 1.500v13M.5 8h15" stroke="#666" fill="#e8e8e8" />
        <path d="M2.500 3.500h3.500v2.500H2.500zM10 3.500h3.500v2.500H10zM2.500 10h3.500v2.500H2.500zM10 10h3.500v2.500H10z" stroke="#999" fill="#fff" />
      </>
    ),
  },
]

const NavBar = () => (
  <div className="absolute bottom-[6px] left-1/2 flex h-6 w-[240px] -translate-x-1/2 items-center justify-between bg-[#f4f4f4] pr-[3px] pb-[2px] pl-1">
    {navTools.map(tool => (
      <button
        key={tool.name}
        aria-label={tool.name}
        className={tool.menu ? 'flex items-center gap-[5px]' : 'flex items-center pr-[4px]'}
      >
        <Icon size={16}>{tool.art}</Icon>
        {tool.menu && <Caret />}
      </button>
    ))}
  </div>
)

const Comments = () => (
  <div className="absolute bottom-1 left-1 flex h-[25px] w-[300px] items-center border border-t-0 border-[#dcdcdc] bg-[#f4f4f4] pr-3 pl-[27px] text-xs text-[#3c3c3c]">
    <h2 className="flex-1 pt-[3px]">COMMENTS</h2>
    <button aria-label="Add comment">
      <svg width="8" height="8" viewBox="0 0 8 8" stroke="#6b6b6b" strokeWidth="2"><path d="M4 0v8M0 4h8" /></svg>
    </button>
  </div>
)

const playback = [
  { name: 'Go to start', d: 'M1 1h2v12H1zM12 1v12L3.500 7z' },
  { name: 'Step back', d: 'M10 1v12L0 7zM11 5h2v5h-2z' },
  { name: 'Play', d: 'M1 -.5L13 7 1 14.500z' },
  { name: 'Step forward', d: 'M4 1v12L14 7zM1 5h2v5H1z' },
  { name: 'Go to end', d: 'M2 1v12L10.500 7zM11 1h2v12h-2z' },
]

const Timeline = () => (
  <footer className="flex h-[50px] shrink-0 items-center bg-[#f4f4f4] pr-[13px] pl-[10px]">
    <div className="flex gap-[11px]">
      {playback.map(control => (
        <button key={control.name} aria-label={control.name}>
          <svg className="overflow-visible" width="14" height="14" viewBox="0 0 14 14" fill="#7b7b7b"><path d={control.d} /></svg>
        </button>
      ))}
    </div>
    <svg className="mt-1 ml-[21px]" width="54" height="34" viewBox="0 0 54 34" fill="none" role="img" aria-label="Timeline features">
      <path d="M2.500 7h12v13H2.500z" stroke="#555" strokeDasharray="2 1" />
      <path d="M1 5.500h2.500V8H1zM13.500 5.500H16V8h-2.500zM1 18.500h2.500V21H1z" fill="#2c87cf" />
      <path d="M9 21l1-4 4.500-4 2.500 2.500-4.500 4.500z" fill="#f7b733" />
      <path d="M14 13.500l1.500-1 2 2-1.200 1.200z" fill="#e2432a" />
      <path d="M25 20.500h10l2.500-2v1.500L35 22.500H25z" fill="#aaa" />
      <path d="M25 8.500l3-3h9.500V15L34.500 18.500H25z" fill="#5aa9e2" stroke="#3a88c6" />
      <path d="M25.500 8l2.500-2h9L34.500 8z" fill="#8cccff" />
      <path d="M39.500 7v11.500" stroke="#333" />
      <path d="M37.500 8.500l2-3 2 3z" fill="#333" />
      <path d="M9.500 25v6h24v-6" stroke="#c8c8c8" strokeWidth="2" />
      <path d="M39 0h12v4l-5 5v23h-2V9l-5-5z" fill="#3c3c3c" />
    </svg>
    <button aria-label="Timeline settings" className="ml-auto">
      <GearIcon hub="#f4f4f4" />
    </button>
  </footer>
)

export default function App() {
  return (
    <div className="flex h-screen flex-col overflow-hidden bg-white font-['Noto_Sans',sans-serif]">
      <TitleBar />
      <TabBar />
      <Ribbon />
      <main className="relative min-h-0 flex-1 bg-white">
        <Model />
        <Browser />
        <ViewCube />
        <Comments />
        <NavBar />
      </main>
      <Timeline />
    </div>
  )
}
